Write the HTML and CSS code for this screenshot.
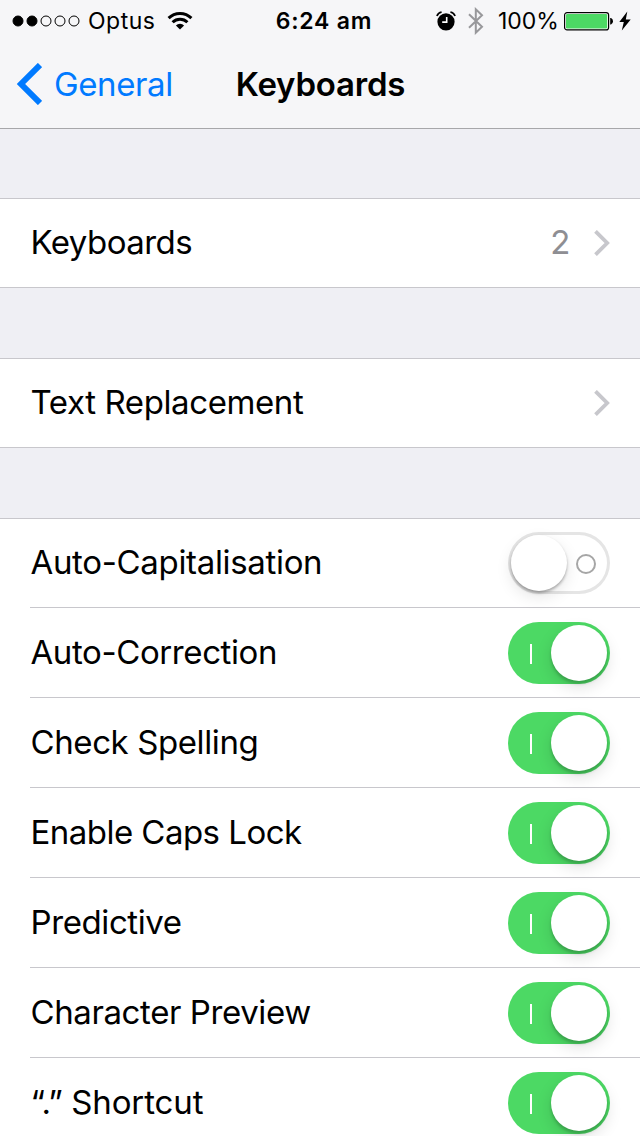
FILE: index.html
```html
<!DOCTYPE html>
<html lang="en-AU">
<head>
<meta charset="utf-8">
<title>Keyboards</title>
<link rel="stylesheet" href="styles.css">
</head>
<body>
<header class="header">
  <div class="status">
    <div class="status-left">
      <svg class="dots" width="68" height="12" viewBox="0 0 68 12"><g stroke="#000"><circle cx="6" cy="6" r="5"/><circle cx="20" cy="6" r="5"/><g fill="none"><circle cx="34" cy="6" r="5"/><circle cx="48" cy="6" r="5"/><circle cx="62" cy="6" r="5"/></g></g></svg>
      <span class="carrier">Optus</span>
      <svg class="wifi" width="26" height="19" viewBox="0 0 26 19"><g fill="none" stroke="#000" stroke-width="3"><path d="M1.6 7.1a16.2 16.2 0 0 1 22.8 0"/><path d="M5.600 11.300a10.500 10.500 0 0 1 14.800 0"/></g><path d="M8.900 14.400a5.800 5.800 0 0 1 8.200 0L13 18.500z"/></svg>
    </div>
    <span class="time">6:24 am</span>
    <div class="status-right">
      <svg class="alarm" width="20" height="20" viewBox="0 0 20 20"><circle cx="10" cy="10.8" r="8.6"/><g fill="none" stroke="#000" stroke-width="1.7"><path d="M.9 5Q2.200 1.800 5.600 1"/><path d="M19.100 5Q17.800 1.800 14.400 1"/></g><path d="M10.700 6v5.100H6.200" fill="none" stroke="#fff" stroke-width="1.6"/></svg>
      <svg class="bluetooth" width="16" height="28" viewBox="0 0 16 28"><path d="M1 7.200l13 12.500-6.200 6V2.300l6.200 6L1 20.800" fill="none" stroke="#98989b" stroke-width="2"/></svg>
      <span class="percent">100%</span>
      <svg class="battery" width="50" height="20" viewBox="0 0 50 20"><rect x=".6" y="1.600" width="44" height="17.300" rx="2.500" fill="#fff" stroke="#000" stroke-width="1.200"/><rect x="2" y="3" width="41.200" height="14.500" rx="1.300" fill="#4cd964"/><path d="M46.200 7h.8q2 .7 2 3.300t-2 3.300h-.8z"/></svg>
      <svg class="bolt" width="12" height="20" viewBox="0 0 12 20"><path d="M8.300 .6L.3 11h4.500L2.800 19.400 11.700 8.500H6.800z"/></svg>
    </div>
  </div>
  <nav class="nav">
    <a class="back"><svg width="26" height="42" viewBox="0 0 26 42"><path d="M24 2L5 21l19 19" fill="none" stroke="#007aff" stroke-width="6"/></svg><span class="back-label">General</span></a>
    <h1 class="title">Keyboards</h1>
  </nav>
</header>
<main class="settings">
  <section class="group">
    <div class="row"><span class="label keyboards">Keyboards</span><span class="value">2</span><svg class="chevron" width="16" height="26" viewBox="0 0 16 26"><path d="M1.500 1.300L13.200 13 1.500 24.700" fill="none" stroke="#c7c7cc" stroke-width="3.800"/></svg></div>
  </section>
  <section class="group">
    <div class="row"><span class="label replacement">Text Replacement</span><svg class="chevron" width="16" height="26" viewBox="0 0 16 26"><path d="M1.500 1.300L13.200 13 1.500 24.700" fill="none" stroke="#c7c7cc" stroke-width="3.800"/></svg></div>
  </section>
  <section class="group">
    <div class="row"><span class="label capitalisation">Auto-Capitalisation</span><span class="toggle off"><i class="knob"></i><i class="ring"></i></span></div>
    <div class="row"><span class="label correction">Auto-Correction</span><span class="toggle"><i class="bar"></i><i class="knob"></i></span></div>
    <div class="row"><span class="label spelling">Check Spelling</span><span class="toggle"><i class="bar"></i><i class="knob"></i></span></div>
    <div class="row"><span class="label caps">Enable Caps Lock</span><span class="toggle"><i class="bar"></i><i class="knob"></i></span></div>
    <div class="row"><span class="label predictive">Predictive</span><span class="toggle"><i class="bar"></i><i class="knob"></i></span></div>
    <div class="row"><span class="label preview">Character Preview</span><span class="toggle"><i class="bar"></i><i class="knob"></i></span></div>
    <div class="row"><span class="label shortcut"><span class="quotes">“.”</span> Shortcut</span><span class="toggle"><i class="bar"></i><i class="knob"></i></span></div>
  </section>
</main>
</body>
</html>
```
FILE: styles.css
```css
* { box-sizing: border-box; }
body {
  margin: 0;
  width: 640px;
  height: 1136px;
  overflow: hidden;
  background: #efeff4;
  color: #000;
  font-family: Inter, "Liberation Sans", sans-serif;
}
svg { display: block; flex: none; }
.header {
  height: 129px;
  background: #f6f6f8;
  border-bottom: 1px solid #a7a7aa;
}
.status {
  display: grid;
  grid-template-columns: 1fr auto 1fr;
  grid-template-rows: 40px;
  height: 40px;
  align-items: center;
  padding: 0 9px 0 13px;
  font-size: 23px;
  line-height: 38px;
  white-space: nowrap;
}
.status-left, .status-right { display: flex; align-items: center; height: 40px; }
.status-right { justify-content: flex-end; }
.status svg { position: relative; top: .5px; }
.dots { margin-left: -1px; }
.carrier, .time, .percent { padding-top: 2px; }
.carrier { margin-left: 8px; width: 68px; letter-spacing: .5px; }
.wifi { margin-left: 11px; }
.time { padding-left: 4px; font-weight: 600; letter-spacing: .8px; }
.bluetooth { margin-left: 12px; }
.percent { margin-left: 14px; width: 60px; }
.battery { margin-left: 6px; }
.bolt { margin-left: 5px; }
.nav {
  display: grid;
  grid-template-columns: 1fr auto 1fr;
  align-items: center;
  height: 88px;
  padding: 0 16px;
}
.back { display: flex; align-items: center; color: #007aff; font-size: 33px; }
.back-label { margin-left: 12px; letter-spacing: -.4px; }
.title { margin: 0; padding-left: 1px; font-size: 33px; font-weight: 600; letter-spacing: -.2px; }
.group {
  margin-top: 70px;
  background: #fff;
  box-shadow: inset 0 1px #c8c7cc;
}
.header + .settings .group:first-child { margin-top: 69px; }
.row {
  display: flex;
  align-items: center;
  height: 90px;
  margin-left: 30px;
  padding-right: 30px;
  box-shadow: inset 0 -1px #c8c7cc;
}
.row:only-child { margin-left: 0; padding-left: 30px; }
.label { margin: 0 auto 2px .5px; font-size: 33px; line-height: 40px; letter-spacing: -.4px; white-space: nowrap; }
.keyboards { letter-spacing: -.55px; }
.capitalisation { letter-spacing: -.33px; }
.caps { letter-spacing: -.53px; }
.shortcut { letter-spacing: -.1px; }
.quotes { letter-spacing: -.8px; }
.value { margin: 0 23.5px 2px 0; color: #8e8e93; font-size: 33px; line-height: 40px; }
.toggle {
  position: relative;
  flex: none;
  width: 102px;
  height: 62px;
  border-radius: 31px;
  background: #4cd964;
}
.toggle.off { background: #fff; box-shadow: inset 0 0 0 3px #e5e5e5; }
.knob {
  position: absolute;
  top: 3px;
  right: 3px;
  width: 56px;
  height: 56px;
  border-radius: 50%;
  background: #fff;
  box-shadow: 0 3px 3px rgba(0,0,0,.18), 0 6px 16px rgba(0,0,0,.13);
}
.off .knob { right: auto; left: 3px; box-shadow: 0 2px 3px rgba(0,0,0,.3), 0 6px 16px rgba(0,0,0,.1); }
.bar { position: absolute; left: 22px; top: 22px; width: 2px; height: 20px; background: #fff; }
.ring { position: absolute; left: 68px; top: 22px; width: 20px; height: 20px; border: 2px solid #a6a6a6; border-radius: 50%; }
```
